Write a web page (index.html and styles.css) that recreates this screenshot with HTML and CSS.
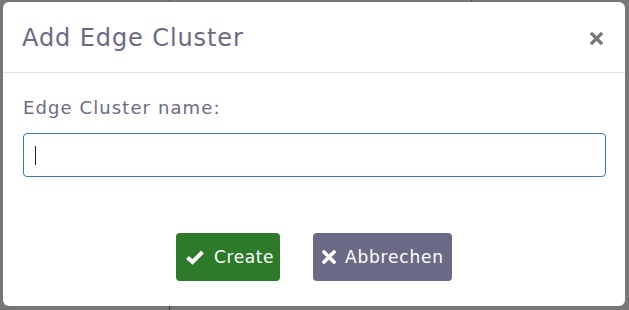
FILE: index.html
```html
<!DOCTYPE html>
<html>
<head>
    <meta charset="utf-8"/>
    <title>Add Edge Cluster</title>
    <link rel="stylesheet" href="styles.css">
</head>
<body>
<div class="backdrop">
    <div class="modal">
        <div class="modal_header">
            <h4 class="modal_title">Add Edge Cluster</h4>
            <span class="close">
                <svg width="13" height="13" viewBox="0 0 13 13"><path d="M2 2 L11 11 M11 2 L2 11" stroke="#777" stroke-width="3.2" stroke-linecap="square"/></svg>
            </span>
        </div>
        <div class="modal_body">
            <label class="lbl">Edge Cluster name:</label>
            <div class="input"><span class="caret"></span></div>
        </div>
        <div class="modal_footer">
            <button class="btn btn_create">
                <svg width="18" height="16" viewBox="0 0 18 16"><path d="M1.5 8.5 L6.5 13 L16.5 3" fill="none" stroke="#fff" stroke-width="4" stroke-linejoin="miter"/></svg>
                Create
            </button>
            <button class="btn btn_cancel">
                <svg width="14" height="14" viewBox="0 0 14 14"><path d="M2 2 L12 12 M12 2 L2 12" stroke="#fff" stroke-width="3.6" stroke-linecap="square"/></svg>
                Abbrechen
            </button>
        </div>
    </div>
</div>
</body>
</html>
```
FILE: styles.css
```css
*{ padding:0; margin:0; box-sizing:border-box; }
body{ background:#777777; width:629px; height:310px; overflow:hidden; font-family:"DejaVu Sans", "Noto Sans", sans-serif; }
.backdrop{ height:310px; padding:2px 4px 0 3px;
    background:linear-gradient(#555, #555) 169px 0 / 1px 2px no-repeat, linear-gradient(#555, #555) 471px 0 / 1px 2px no-repeat, linear-gradient(#333, #333) 169px 306px / 1px 4px no-repeat, #777777; }
.modal{ background:#fff; border-radius:6px; height:304px; display:flex; flex-direction:column; }
.modal_header{ height:71px; border-bottom:1px solid #e5e5e5; display:flex; align-items:center; justify-content:space-between; padding:0 22px 0 19px; }
.modal_title{ font-size:24px; font-weight:400; color:#6a6a86; letter-spacing:0.9px; padding-top:2px; }
.close{ display:flex; margin-top:2px; }
.modal_body{ padding:24px 19px 0 20px; }
.lbl{ display:block; font-size:18px; color:#6c6c85; line-height:22px; letter-spacing:1.1px; margin-bottom:14px; }
.input{ height:44px; border:1px solid #3a7ab8; border-radius:4px; padding:12px 11px; }
.caret{ display:block; width:1px; height:19px; background:#222; }
.modal_footer{ display:flex; justify-content:center; gap:33px; padding-top:56px; }
.btn{ height:48px; border:none; border-radius:4px; color:#fff; font-family:"DejaVu Sans", "Noto Sans", sans-serif; font-size:17px; letter-spacing:0.8px; display:flex; align-items:center; }
.btn_create{ background:#2c7a2a; width:104px; padding-left:10px; gap:10px; letter-spacing:0.6px; }
.btn_cancel{ background:#6a6a86; width:139px; padding-left:9px; gap:9px; }
```
